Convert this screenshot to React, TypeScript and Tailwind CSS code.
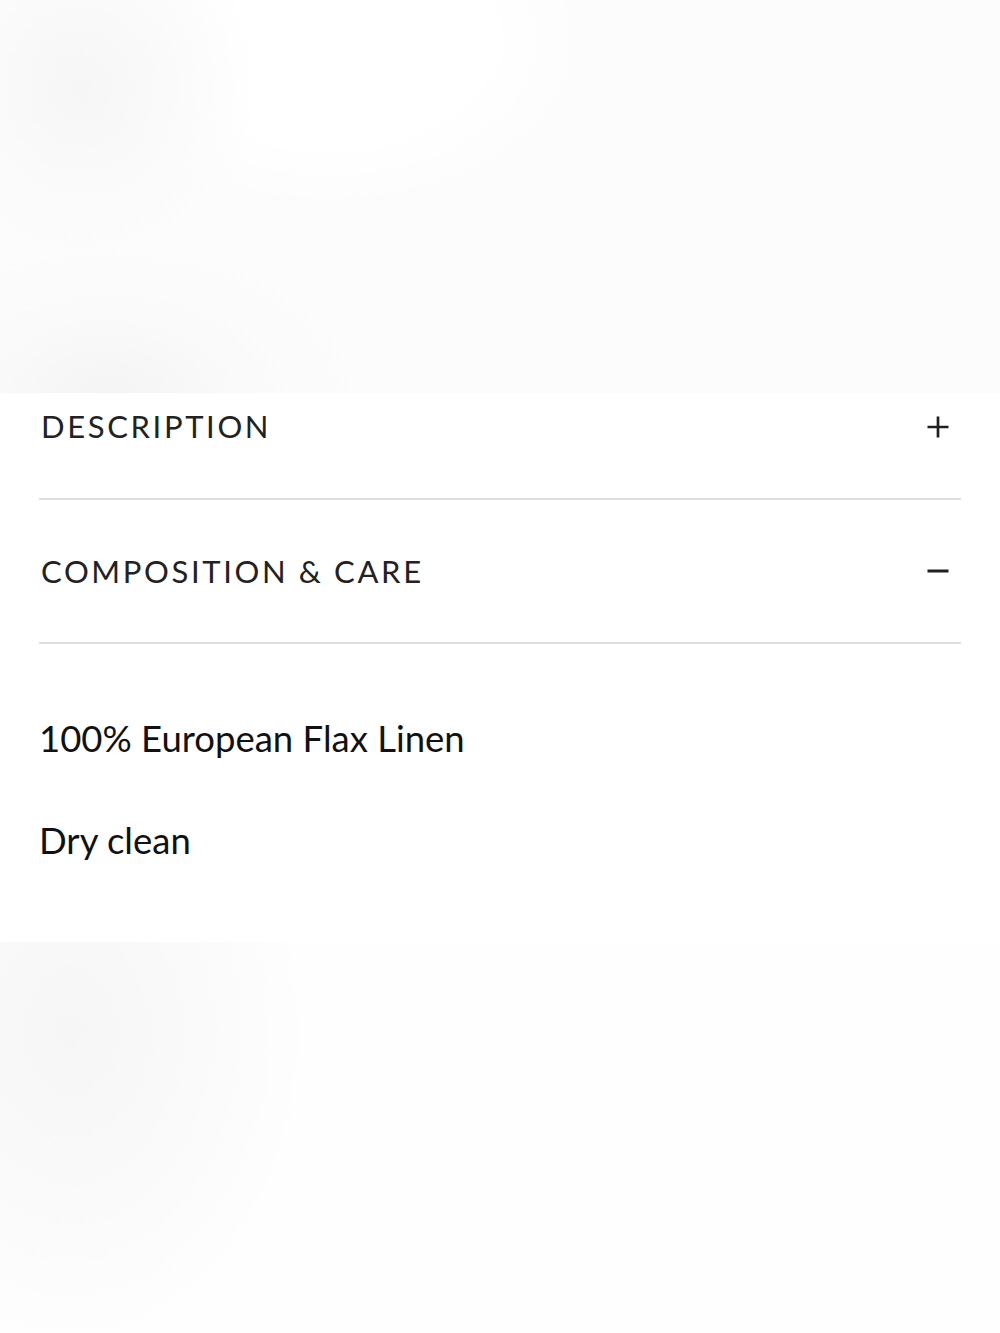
import React, { useState } from 'react';

type Section = {
  key: string;
  title: string;
  body?: string[];
};

const sections: Section[] = [
  { key: 'description', title: 'DESCRIPTION' },
  {
    key: 'composition',
    title: 'COMPOSITION & CARE',
    body: ['100% European Flax Linen', 'Dry clean'],
  },
];

const Plus = () => (
  <svg width="24" height="24" viewBox="0 0 24 24" fill="none" stroke="#1f1f1f" strokeWidth="2.7">
    <path d="M12 1.5v21M1.5 12h21" />
  </svg>
);

const Minus = () => (
  <svg width="24" height="24" viewBox="0 0 24 24" fill="none" stroke="#1f1f1f" strokeWidth="3">
    <path d="M1.5 12h21" />
  </svg>
);

const App: React.FC = () => {
  const [open, setOpen] = useState<string>('composition');

  return (
    <div
      className="min-h-screen w-full flex flex-col bg-[#fdfdfd] text-[#1c1c1c]"
      style={{ fontFamily: 'Lato, "Open Sans", sans-serif' }}
    >
      {/* Faded product image area above */}
      <div className="h-[393px] w-full bg-[radial-gradient(ellipse_180px_200px_at_80px_90px,#f6f6f6_0%,#fbfbfb_60%,transparent_100%),radial-gradient(ellipse_260px_160px_at_110px_395px,#f4f4f4_0%,#fafafa_50%,transparent_100%),radial-gradient(ellipse_260px_170px_at_330px_40px,#ffffff_0%,#ffffff_60%,transparent_100%),linear-gradient(#fcfcfc,#fcfcfc)]" />

      {/* Accordion panel */}
      <div className="w-full bg-white px-[39px] pb-[82px]">
        {sections.map((s, i) => {
          const isOpen = open === s.key;
          return (
            <div key={s.key}>
              <button
                type="button"
                onClick={() => setOpen(isOpen ? '' : s.key)}
                className={
                  i === 0
                    ? 'w-full h-[107px] pb-[38px] flex items-center justify-between border-b-2 border-[#dedede] text-left'
                    : 'w-full h-[144px] flex items-center justify-between border-b-2 border-[#dedede] text-left'
                }
              >
                <span className="pl-[2px] text-[31px] leading-none tracking-[0.085em] text-[#222222]">
                  {s.title}
                </span>
                <span className="mr-[11px] flex items-center">{isOpen ? <Minus /> : <Plus />}</span>
              </button>
              {isOpen && s.body && (
                <div className="pt-[74px] flex flex-col gap-[62px]">
                  {s.body.map((line) => (
                    <p key={line} className="text-[36.5px] leading-[40px] text-[#111111]">
                      {line}
                    </p>
                  ))}
                </div>
              )}
            </div>
          );
        })}
      </div>

      {/* Faded image area below */}
      <div className="flex-1 min-h-[393px] w-full bg-[radial-gradient(ellipse_240px_320px_at_70px_90px,#f6f6f6_0%,#fafafa_55%,transparent_100%),linear-gradient(#fefefe,#fefefe)]" />
    </div>
  );
};

export default App;
